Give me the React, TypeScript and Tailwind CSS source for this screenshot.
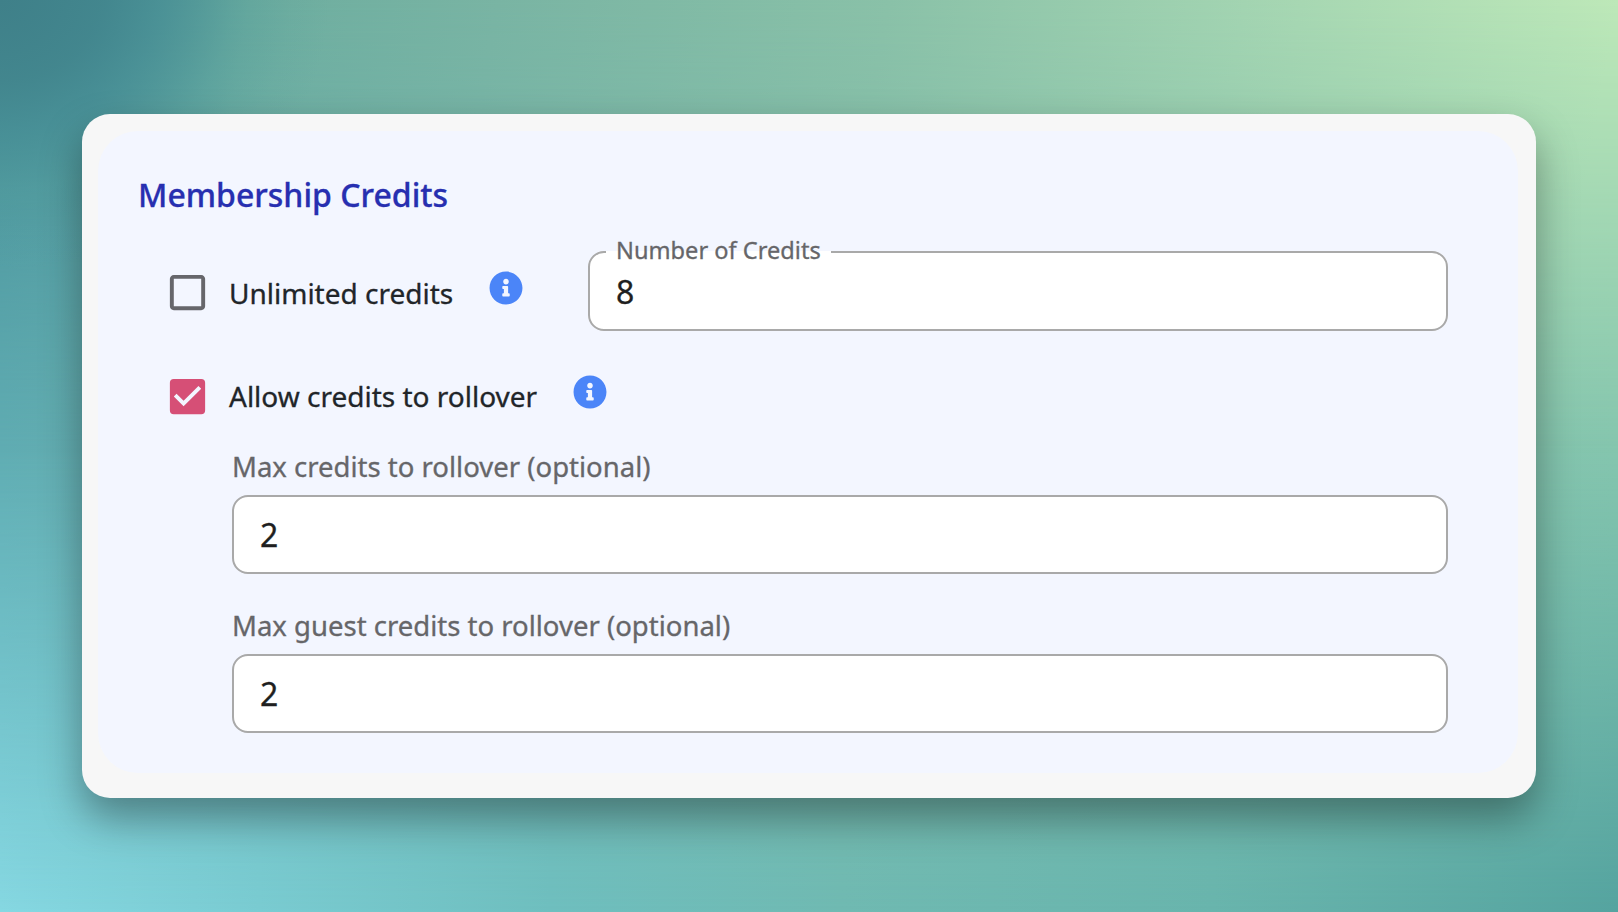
import { FaInfoCircle } from "react-icons/fa";
import { MdCheckBox, MdCheckBoxOutlineBlank } from "react-icons/md";

function Backdrop() {
  return (
    <div className="absolute inset-0 -z-10">
      <div className="absolute inset-0 bg-[linear-gradient(90deg,#86d8e2_0%,#7accd2_16%,#6fbfbf_34%,#70bab2_52%,#69b5ad_75%,#55a4a0_100%)]" />
      <div className="absolute inset-0 bg-[linear-gradient(90deg,#60adb3_0%,#65aeb0_8%,#7ab8a8_50%,#84c5ae_100%)] mask-[linear-gradient(180deg,#000_50%,transparent_100%)]" />
      <div className="absolute inset-0 bg-[linear-gradient(100deg,#438a92_0%,#4a9298_6%,#6dad9f_14%,#79b4a3_28%,#8ac1a8_50%,#a3d4b1_70%,#bde8b8_91%)] mask-[linear-gradient(180deg,#000_0%,transparent_50%)]" />
      <div className="absolute inset-0 bg-[radial-gradient(ellipse_330px_270px_at_0_0,#3f8089_0%,#41848cd9_30%,#458c93b3_48%,#4f999966_70%,#4f99991a_88%,transparent_100%)]" />
    </div>
  );
}

function InfoIcon() {
  return <FaInfoCircle className="size-[34px] text-[#4b85f8]" />;
}

function CheckRow({ label, checked = false }: { label: string; checked?: boolean }) {
  const Icon = checked ? MdCheckBox : MdCheckBoxOutlineBlank;
  return (
    <div className="flex h-12 items-center">
      <Icon className={checked ? "size-[47px] shrink-0 text-[#d64f76]" : "size-[47px] shrink-0 text-[#66666b]"} />
      <span className={`ml-[18px] text-[28px] leading-10 whitespace-nowrap text-[#212529] ${checked ? "" : "pt-0.5"}`}>{label}</span>
      <div className="mb-[9px] ml-9">
        <InfoIcon />
      </div>
    </div>
  );
}

function Field({ label, value }: { label: string; value: string }) {
  return (
    <div>
      <p className="text-[27.5px] leading-[38px] text-[#666669]">{label}</p>
      <div className="mt-[9px] flex h-[79px] items-center rounded-2xl border-2 border-[#a9a9a9] bg-white px-[26px] text-[32px] text-[#1f1f21]">
        {value}
      </div>
    </div>
  );
}

function OutlinedField({ label, value }: { label: string; value: string }) {
  return (
    <div className="relative h-20 w-[860px] rounded-2xl bg-white">
      <fieldset className="absolute inset-x-0 -top-[17px] bottom-0 rounded-2xl border-2 border-[#a9a9a9] pl-4">
        <legend className="h-9 w-[225px] pl-2.5 text-[23.6px] leading-8 whitespace-nowrap text-[#666669]">{label}</legend>
      </fieldset>
      <div className="flex h-full items-center px-7 pt-0.5 text-[32px] text-[#1f1f21]">{value}</div>
    </div>
  );
}

export default function App() {
  return (
    <main className="relative isolate h-[912px] w-[1618px] overflow-hidden px-[82px] pt-[114px] font-['Noto_Sans',sans-serif] [-webkit-text-stroke:0.3px]">
      <Backdrop />

      <div className="h-[684px] rounded-[28px] bg-[#f7f7f7] pt-[17px] pr-[18px] pb-[25px] pl-4 shadow-[0_20px_40px_rgba(0,0,0,0.36)]">
        <section className="h-full rounded-[40px] bg-[#f3f6ff] pt-[42px] pr-[70px] pl-[38px]">
          <h2 className="pl-0.5 text-[32px] leading-11 font-medium text-[#272fb0]">Membership Credits</h2>

          <div className="mt-[34px] flex items-start justify-between pl-7">
            <div className="mt-[17px]">
              <CheckRow label="Unlimited credits" />
            </div>
            <OutlinedField label="Number of Credits" value="8" />
          </div>

          <div className="mt-[41px] pl-7">
            <CheckRow label="Allow credits to rollover" checked />
          </div>

          <div className="mt-7 flex flex-col gap-[33px] pl-24">
            <Field label="Max credits to rollover (optional)" value="2" />
            <Field label="Max guest credits to rollover (optional)" value="2" />
          </div>
        </section>
      </div>
    </main>
  );
}
